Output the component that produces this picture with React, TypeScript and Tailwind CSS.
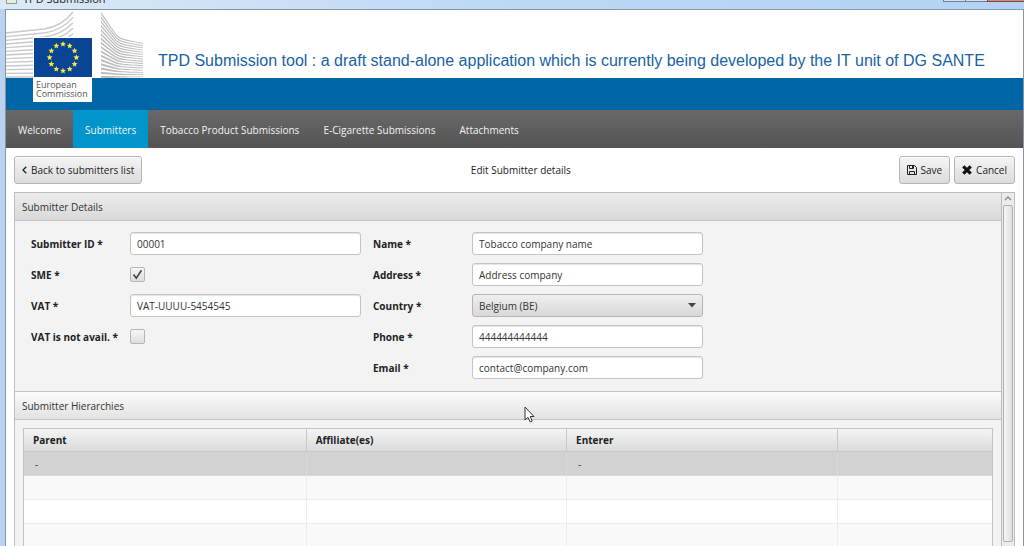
import React from "react";

const FRAME_TEXT = "font-['Open_Sans','Noto_Sans',sans-serif] text-[10px] leading-4";
const BUTTON =
  "flex h-7 items-center whitespace-nowrap rounded-[3px] border border-[#b5b5b5] bg-linear-to-b from-[#f4f4f4] to-[#dcdcdc] px-[7px] text-[#222] shadow-[inset_0_1px_0_#fff]";
const INPUT =
  "h-[23px] w-full min-w-0 rounded-[3px] border border-[#c4c4c4] bg-white px-[6px] text-[#333] shadow-[inset_0_1px_1px_#e4e4e4] outline-none";

const STARS = Array.from({ length: 12 }, (_, i) => {
  const angle = (i * Math.PI) / 6;
  return { x: 57 + 13.4 * Math.sin(angle), y: 47.5 - 13.4 * Math.cos(angle) };
});

function starPoints(cx: number, cy: number) {
  return Array.from({ length: 10 }, (_, i) => {
    const r = i % 2 === 0 ? 3.1 : 1.4;
    const a = (i * Math.PI) / 5;
    return `${(cx + r * Math.sin(a)).toFixed(2)},${(cy - r * Math.cos(a)).toFixed(2)}`;
  }).join(" ");
}

function CommissionLogo() {
  return (
    <svg width="138" height="100" viewBox="0 0 138 100" role="img" aria-label="European Commission" className="shrink-0">
      <g fill="none" stroke="#c9c9c9" strokeWidth="1.4">
        {Array.from({ length: 13 }, (_, i) => {
          const t = i / 12;
          const k = 1 - t;
          const y = 23 + 44 * t;
          const end = 2 + 65 * t;
          return <path key={i} d={`M0 ${y} L38 ${y - 4 * k} C52 ${y - 6 * k} 60 ${end + 9 * k} 67 ${end}`} />;
        })}
      </g>
      <g fill="#bdbdbd">
        {Array.from({ length: 16 }, (_, i) => {
          const t = i / 15;
          const k = 1 - t;
          const y = 2 + 64 * t;
          const end = 33 + 33.5 * t;
          return (
            <path
              key={i}
              d={`M95 ${y} L108 ${y + 19 * k} C113 ${y + 27 * k} 117 ${end - 4 * k} 137 ${end} V${end + 0.8} C117 ${
                end + 1 - 4 * k
              } 113 ${y + 1.5 + 27 * k} 108 ${y + 1.7 + 19 * k} L95 ${y + 2.2}Z`}
            />
          );
        })}
      </g>
      <rect x="27" y="27" width="59" height="65" fill="#fff" />
      <rect x="28" y="28" width="58" height="39" fill="#0a4595" />
      {STARS.map((s, i) => (
        <polygon key={i} points={starPoints(s.x, s.y)} fill="#f8ea3c" />
      ))}
      <g fontFamily="'Open Sans', 'Noto Sans', sans-serif" fontSize="9" fill="#555">
        <text x="30" y="78">European</text>
        <text x="30" y="87">Commission</text>
      </g>
    </svg>
  );
}

function FloppyIcon() {
  return (
    <svg width="10" height="10" viewBox="0 0 10 10" aria-hidden="true" fill="none" stroke="#222" strokeWidth="1">
      <path d="M.5.5H7.5L9.5 2.5V9.5H.5Z" />
      <path d="M2.5.5V3.5H6.5V.5M2.5 9.5V6.5H7.5V9.5" />
      <path d="M5.5 1V3" />
    </svg>
  );
}

function CrossIcon() {
  return (
    <svg width="10" height="10" viewBox="0 0 10 10" aria-hidden="true">
      <path d="M1.3 1.3 8.7 8.7M8.7 1.3 1.3 8.7" stroke="#111" strokeWidth="3.2" />
    </svg>
  );
}

const TABS = ["Welcome", "Submitters", "Tobacco Product Submissions", "E-Cigarette Submissions", "Attachments"];

function Label({ id, children }: { id: string; children: React.ReactNode }) {
  return (
    <label htmlFor={id} className="whitespace-nowrap font-bold text-[#222]">
      {children}
    </label>
  );
}

function TextField({ id, label, value }: { id: string; label: string; value: string }) {
  return (
    <>
      <Label id={id}>{label} *</Label>
      <input id={id} type="text" defaultValue={value} className={INPUT} />
    </>
  );
}

function CheckField({ id, label, checked }: { id: string; label: string; checked: boolean }) {
  return (
    <>
      <Label id={id}>{label} *</Label>
      <div className="grid h-[23px] items-center justify-start">
        <input
          id={id}
          type="checkbox"
          defaultChecked={checked}
          className="peer col-start-1 row-start-1 size-[15px] appearance-none rounded-[2px] border border-[#b5b5b5] bg-linear-to-b from-[#f6f6f6] to-[#dedede]"
        />
        <svg
          viewBox="0 0 15 15"
          aria-hidden="true"
          className="pointer-events-none invisible col-start-1 row-start-1 size-[15px] peer-checked:visible"
        >
          <path d="M3.5 7.5 6.3 11.2 11.5 3.2" fill="none" stroke="#444" strokeWidth="1.6" />
        </svg>
      </div>
    </>
  );
}

const ROWS = [["-", "", "-", ""], ["", "", "", ""], ["", "", "", ""], ["", "", "", ""]];

export default function App() {
  return (
    <div className={`flex h-screen flex-col overflow-hidden bg-[#b9d3ee] ${FRAME_TEXT}`}>
      <div className="flex h-[9px] shrink-0 items-end justify-between overflow-hidden bg-linear-to-r from-[#dce9f7] via-[#bcd8f5] to-[#b4d2f3] pl-[6px]">
        <div className="flex items-end gap-[6px] pb-[5px] text-[11px]">
          <span className="size-[11px] border border-[#8fa08f] bg-[#e4efe0]" />
          <span className="h-[13px] text-[#222]">TPD Submission</span>
        </div>
        <div className="flex h-[9px] items-start">
          <span className="h-[2px] w-[22px] border-b border-l border-[#6d7f92] bg-[#d5e3f1]" />
          <span className="h-[2px] w-[22px] border-b border-l border-[#6d7f92] bg-[#d5e3f1]" />
          <span className="h-[2px] w-[37px] border-b border-l border-[#7a4a40] bg-[#d98d78]" />
        </div>
      </div>

      <div className="ml-[5px] flex min-h-0 flex-1 flex-col border-x border-t border-[#8795a6] bg-white">
        <header className="flex h-[100px] shrink-0 bg-[linear-gradient(#fff_68px,#0065a4_68px)]">
          <CommissionLogo />
          <h1 className="ml-[14px] mt-[41px] whitespace-nowrap font-['Liberation_Sans',sans-serif] text-[16px] leading-5 text-[#1863a2]">
            TPD Submission tool : a draft stand-alone application which is currently being developed by the IT unit of DG SANTE
          </h1>
        </header>

        <nav className="flex h-[38px] shrink-0 bg-linear-to-b from-[#696969] to-[#545454]">
          {TABS.map((tab) => (
            <a
              key={tab}
              href="#"
              className={`flex items-center whitespace-nowrap px-3 pt-px text-[#f2f2f2] ${tab === "Submitters" ? "bg-[#0096cc]" : ""}`}
            >
              {tab}
            </a>
          ))}
        </nav>

        <main className="flex min-h-0 flex-1 flex-col px-2 pt-2">
          <div className="mb-2 flex items-center justify-between">
            <button type="button" className={`${BUTTON} gap-1`}>
              <svg width="5" height="8" viewBox="0 0 5 8" aria-hidden="true">
                <path d="M4.3.7 1 4 4.3 7.3" fill="none" stroke="#222" strokeWidth="1.3" />
              </svg>
              Back to submitters list
            </button>
            <h2 className="text-[#222]">Edit Submitter details</h2>
            <div className="flex gap-1">
              <button type="button" className={`${BUTTON} gap-[3px]`}>
                <FloppyIcon />
                Save
              </button>
              <button type="button" className={`${BUTTON} gap-1`}>
                <CrossIcon />
                Cancel
              </button>
            </div>
          </div>

          <div className="flex min-h-0 flex-1 border border-b-0 border-[#bdbdbd] bg-[#f3f3f3]">
            <div className="min-w-0 flex-1 overflow-hidden">
              <section>
                <h3 className="flex h-7 items-center border-b border-[#c4c4c4] bg-linear-to-b from-[#ececec] to-[#d9d9d9] px-[7px] text-[#333]">
                  Submitter Details
                </h3>
                <form className="grid grid-cols-[87px_231px_87px_231px] items-center gap-x-3 gap-y-2 px-4 pb-3 pt-[11px]">
                  <TextField id="submitter-id" label="Submitter ID" value="00001" />
                  <TextField id="name" label="Name" value="Tobacco company name" />
                  <CheckField id="sme" label="SME" checked />
                  <TextField id="address" label="Address" value="Address company" />
                  <TextField id="vat" label="VAT" value="VAT-UUUU-5454545" />
                  <Label id="country">Country *</Label>
                  <div className="grid items-center">
                    <select
                      id="country"
                      defaultValue="BE"
                      className="col-start-1 row-start-1 h-[23px] w-full appearance-none rounded-[3px] border border-[#b5b5b5] bg-linear-to-b from-[#efefef] to-[#d8d8d8] px-[6px] text-[#333]"
                    >
                      <option value="BE">Belgium (BE)</option>
                    </select>
                    <svg
                      width="8"
                      height="5"
                      viewBox="0 0 8 5"
                      aria-hidden="true"
                      className="pointer-events-none col-start-1 row-start-1 mr-[7px] justify-self-end"
                    >
                      <path d="M0 0H8L4 4.5Z" fill="#444" />
                    </svg>
                  </div>
                  <CheckField id="no-vat" label="VAT is not avail." checked={false} />
                  <TextField id="phone" label="Phone" value="444444444444" />
                  <span className="col-span-2" />
                  <TextField id="email" label="Email" value="contact@company.com" />
                </form>
              </section>

              <section>
                <h3 className="flex h-[29px] items-center border-y border-[#c4c4c4] bg-linear-to-b from-[#fbfbfb] to-[#e2e2e2] px-[7px] text-[#333]">
                  Submitter Hierarchies
                </h3>
                <div className="px-2 pt-2">
                  <table className="w-full table-fixed border-separate border-spacing-0 border border-[#c4c4c4] bg-white text-left">
                    <colgroup>
                      <col className="w-[29.2%]" />
                      <col className="w-[26.9%]" />
                      <col className="w-[28%]" />
                      <col />
                    </colgroup>
                    <thead>
                      <tr className="h-[23px] bg-linear-to-b from-[#f4f4f4] to-[#dadada] text-[#222]">
                        {["Parent", "Affiliate(es)", "Enterer", ""].map((h, i) => (
                          <th key={i} className="border-b border-r border-[#c8c8c8] px-[9px] py-0 font-bold last:border-r-0">
                            {h}
                          </th>
                        ))}
                      </tr>
                    </thead>
                    <tbody>
                      {ROWS.map((row, r) => (
                        <tr key={r} className="h-6 first:bg-[#d2d2d2] even:bg-[#f9f9f9] last:bg-[#f9f9f9]">
                          {row.map((cell, c) => (
                            <td
                              key={c}
                              className={`border-b border-r px-[11px] py-0 text-[#333] last:border-r-0 ${r === 0 ? "border-[#d9d9d9]" : "border-[#ececec]"}`}
                            >
                              {cell}
                            </td>
                          ))}
                        </tr>
                      ))}
                    </tbody>
                  </table>
                </div>
              </section>
            </div>

            <div className="flex w-[13px] shrink-0 flex-col items-center border-l border-[#bdbdbd] bg-[#ececec] pb-1">
              <svg width="8" height="12" viewBox="0 0 8 12" aria-hidden="true">
                <path d="M1 7 4 4 7 7" fill="none" stroke="#888" strokeWidth="1.3" />
              </svg>
              <div className="w-[10px] flex-1 rounded-[2px] border border-[#b0b0b0] bg-linear-to-r from-[#f6f6f6] to-[#dedede]" />
            </div>
          </div>
        </main>
      </div>

      <svg width="12" height="18" viewBox="0 0 12 18" aria-hidden="true" className="pointer-events-none absolute left-[524px] top-[406px]">
        <path d="M1 1V14L4 11.3 6.2 16 8.2 15 6.2 10.5H10Z" fill="#fff" stroke="#333" strokeWidth="1" />
      </svg>
    </div>
  );
}
